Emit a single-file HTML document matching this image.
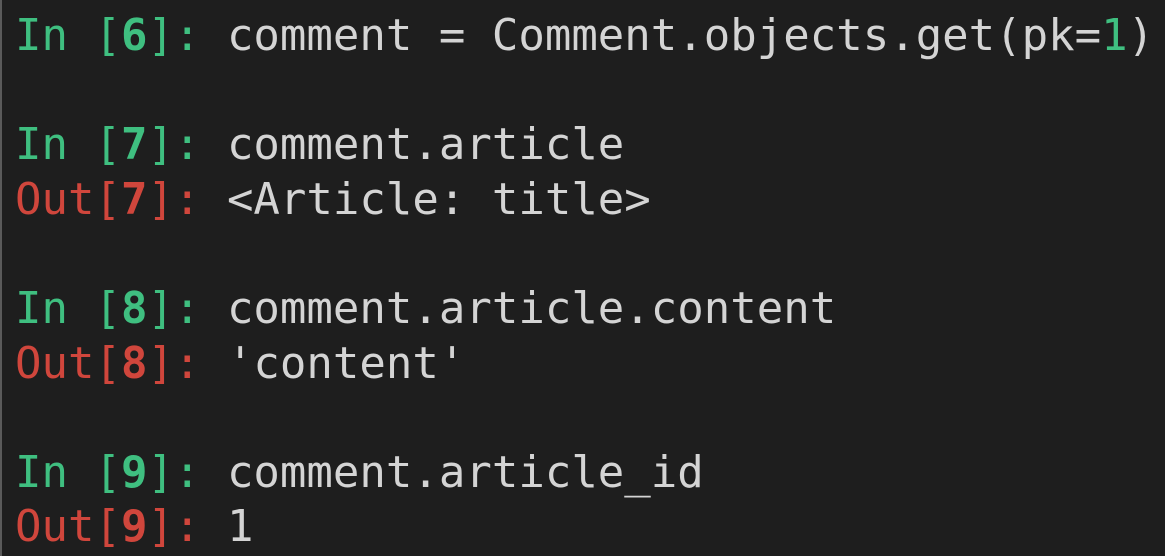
<!DOCTYPE html>
<html><head><style>
html,body{margin:0;padding:0;width:1165px;height:556px;overflow:hidden;background:#1e1e1e;}
body{border-left:2px solid #5a5a5a;box-sizing:border-box;}
pre{margin:0;padding:9px 0 0 13px;font-family:"DejaVu Sans Mono","Liberation Mono",monospace;font-size:44px;line-height:54.6px;color:#d4d4d4;}
.g{color:#3fbf80}.r{color:#d0463c}b{font-weight:bold}
</style></head><body><pre><span class="g">In [<b>6</b>]:</span> comment = Comment.objects.get(pk=<span class="g">1</span>)

<span class="g">In [<b>7</b>]:</span> comment.article
<span class="r">Out[<b>7</b>]:</span> &lt;Article: title&gt;

<span class="g">In [<b>8</b>]:</span> comment.article.content
<span class="r">Out[<b>8</b>]:</span> 'content'

<span class="g">In [<b>9</b>]:</span> comment.article_id
<span class="r">Out[<b>9</b>]:</span> 1</pre></body></html>
